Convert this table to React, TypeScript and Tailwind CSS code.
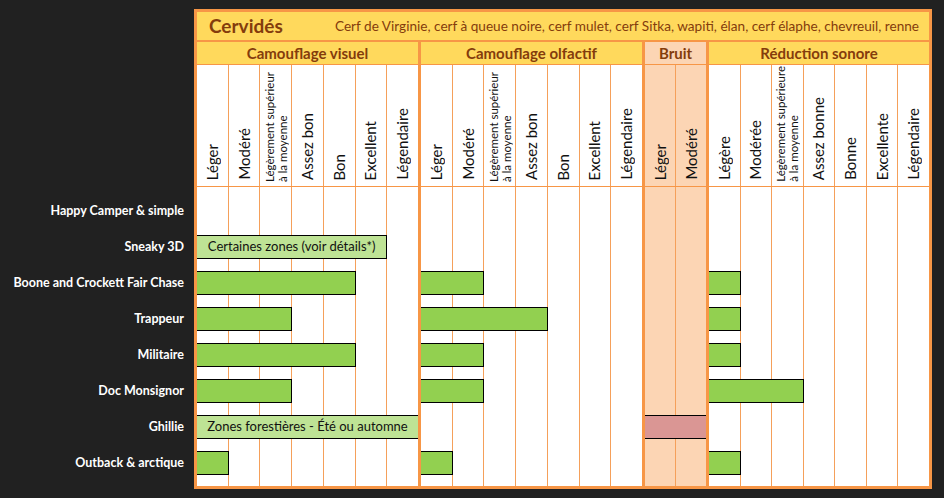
import React from 'react';

type Bar = { span: number; kind: 'green' | 'light' | 'pink'; text?: string };

interface Group {
  title: string;
  width: string;
  peach?: boolean;
  cols: string[];
  bars: Record<number, Bar>;
}

const LONG = 'Légèrement supérieur|à la moyenne';

const groups: Group[] = [
  {
    title: 'Camouflage visuel',
    width: 'w-[221px]',
    cols: ['Léger', 'Modéré', LONG, 'Assez bon', 'Bon', 'Excellent', 'Légendaire'],
    bars: {
      1: { span: 6, kind: 'light', text: 'Certaines zones (voir détails*)' },
      2: { span: 5, kind: 'green' },
      3: { span: 3, kind: 'green' },
      4: { span: 5, kind: 'green' },
      5: { span: 3, kind: 'green' },
      6: { span: 7, kind: 'light', text: 'Zones forestières - Été ou automne' },
      7: { span: 1, kind: 'green' },
    },
  },
  {
    title: 'Camouflage olfactif',
    width: 'w-[221px]',
    cols: ['Léger', 'Modéré', LONG, 'Assez bon', 'Bon', 'Excellent', 'Légendaire'],
    bars: {
      2: { span: 2, kind: 'green' },
      3: { span: 4, kind: 'green' },
      4: { span: 2, kind: 'green' },
      5: { span: 2, kind: 'green' },
      7: { span: 1, kind: 'green' },
    },
  },
  {
    title: 'Bruit',
    width: 'w-[61px]',
    peach: true,
    cols: ['Léger', 'Modéré'],
    bars: {
      6: { span: 2, kind: 'pink' },
    },
  },
  {
    title: 'Réduction sonore',
    width: 'w-[220px]',
    cols: ['Légère', 'Modérée', 'Légèrement supérieure|à la moyenne', 'Assez bonne', 'Bonne', 'Excellente', 'Légendaire'],
    bars: {
      2: { span: 1, kind: 'green' },
      3: { span: 1, kind: 'green' },
      4: { span: 1, kind: 'green' },
      5: { span: 3, kind: 'green' },
      7: { span: 1, kind: 'green' },
    },
  },
];

const rows = [
  'Happy Camper & simple',
  'Sneaky 3D',
  'Boone and Crockett Fair Chase',
  'Trappeur',
  'Militaire',
  'Doc Monsignor',
  'Ghillie',
  'Outback & arctique',
];

const SPAN: Record<number, string> = {
  1: 'col-[1/2]',
  2: 'col-[1/3]',
  3: 'col-[1/4]',
  4: 'col-[1/5]',
  5: 'col-[1/6]',
  6: 'col-[1/7]',
  7: 'col-[1/8]',
};

const ROW = ['row-start-2', 'row-start-3', 'row-start-4', 'row-start-5', 'row-start-6', 'row-start-7', 'row-start-8', 'row-start-9'];
const COL = ['col-start-1', 'col-start-2', 'col-start-3', 'col-start-4', 'col-start-5', 'col-start-6', 'col-start-7'];

const BAR_BG = {
  green: 'bg-[#92D050]',
  light: 'bg-[#BEE395]',
  pink: 'bg-[#DA9694]',
};

function ColLabel({ label }: { label: string }) {
  if (label.includes('|')) {
    const [a, b] = label.split('|');
    return (
      <span className="[writing-mode:vertical-rl] rotate-180 whitespace-nowrap text-[11.5px] leading-[13px] mb-[-2px]">
        {a}
        <br />
        {b}
      </span>
    );
  }
  return (
    <span className="[writing-mode:vertical-rl] rotate-180 whitespace-nowrap text-[15px] leading-[17px]">
      {label}
    </span>
  );
}

function GroupColumn({ group }: { group: Group }) {
  const n = group.cols.length;
  const cellBg = group.peach ? 'bg-[#FCD5B4]' : 'bg-white';
  const gridCols = n === 7 ? 'grid-cols-7' : 'grid-cols-2';

  return (
    <div className={`${group.width} flex flex-col gap-y-px`}>
      <div
        className={`h-[22px] flex items-center justify-center font-bold text-[15px] text-[#843C0C] ${
          group.peach ? 'bg-[#FCD5B4]' : 'bg-[#FFD95C]'
        }`}
      >
        {group.title}
      </div>
      <div className={`h-[121px] grid ${gridCols} gap-x-px bg-[#F5A05A]`}>
        {group.cols.map((c, i) => (
          <div key={i} className={`${cellBg} flex flex-col items-center justify-end pb-[6px] text-[#111]`}>
            <ColLabel label={c} />
          </div>
        ))}
      </div>
      <div className={`h-[299px] grid ${gridCols} gap-x-px grid-rows-[6px_repeat(8,36px)_5px] bg-[#F5A05A]`}>
        {group.cols.map((_, i) => (
          <div key={i} className={`${cellBg} ${COL[i]} row-span-full`} />
        ))}
        {Object.entries(group.bars).map(([r, bar]) => {
          const full = bar.span === n;
          return (
            <div
              key={r}
              className={`${ROW[Number(r)]} ${SPAN[bar.span]} self-center h-6 border-y border-black ${
                full ? '' : 'border-r -mr-px'
              } ${BAR_BG[bar.kind]} flex items-center justify-center text-[13px] text-[#111] whitespace-nowrap`}
            >
              {bar.text}
            </div>
          );
        })}
      </div>
    </div>
  );
}

export default function App() {
  return (
    <div className="w-[944px] h-[498px] bg-[#212121] pt-[9px] flex font-['Lato',sans-serif]">
      <div className="w-[194px] pt-[184px] flex flex-col">
        {rows.map((r) => (
          <div key={r} className="h-9 flex items-center justify-end pr-[10px] text-white font-bold text-[12.5px]">
            {r}
          </div>
        ))}
      </div>
      <div className="w-[738px] h-[480px] border-[3px] border-[#F79646] bg-[#F79646] flex flex-col gap-y-[2px]">
        <div className="h-[28px] bg-[#FFD95C] grid grid-cols-[126px_1fr] items-center text-[#843C0C] whitespace-nowrap pl-[12px]">
          <span className="font-bold text-[19px]">Cervidés</span>
          <span className="text-[13.6px]">
            Cerf de Virginie, cerf à queue noire, cerf mulet, cerf Sitka, wapiti, élan, cerf élaphe, chevreuil, renne
          </span>
        </div>
        <div className="flex gap-x-[3px]">
          {groups.map((g) => (
            <GroupColumn key={g.title} group={g} />
          ))}
        </div>
      </div>
    </div>
  );
}
